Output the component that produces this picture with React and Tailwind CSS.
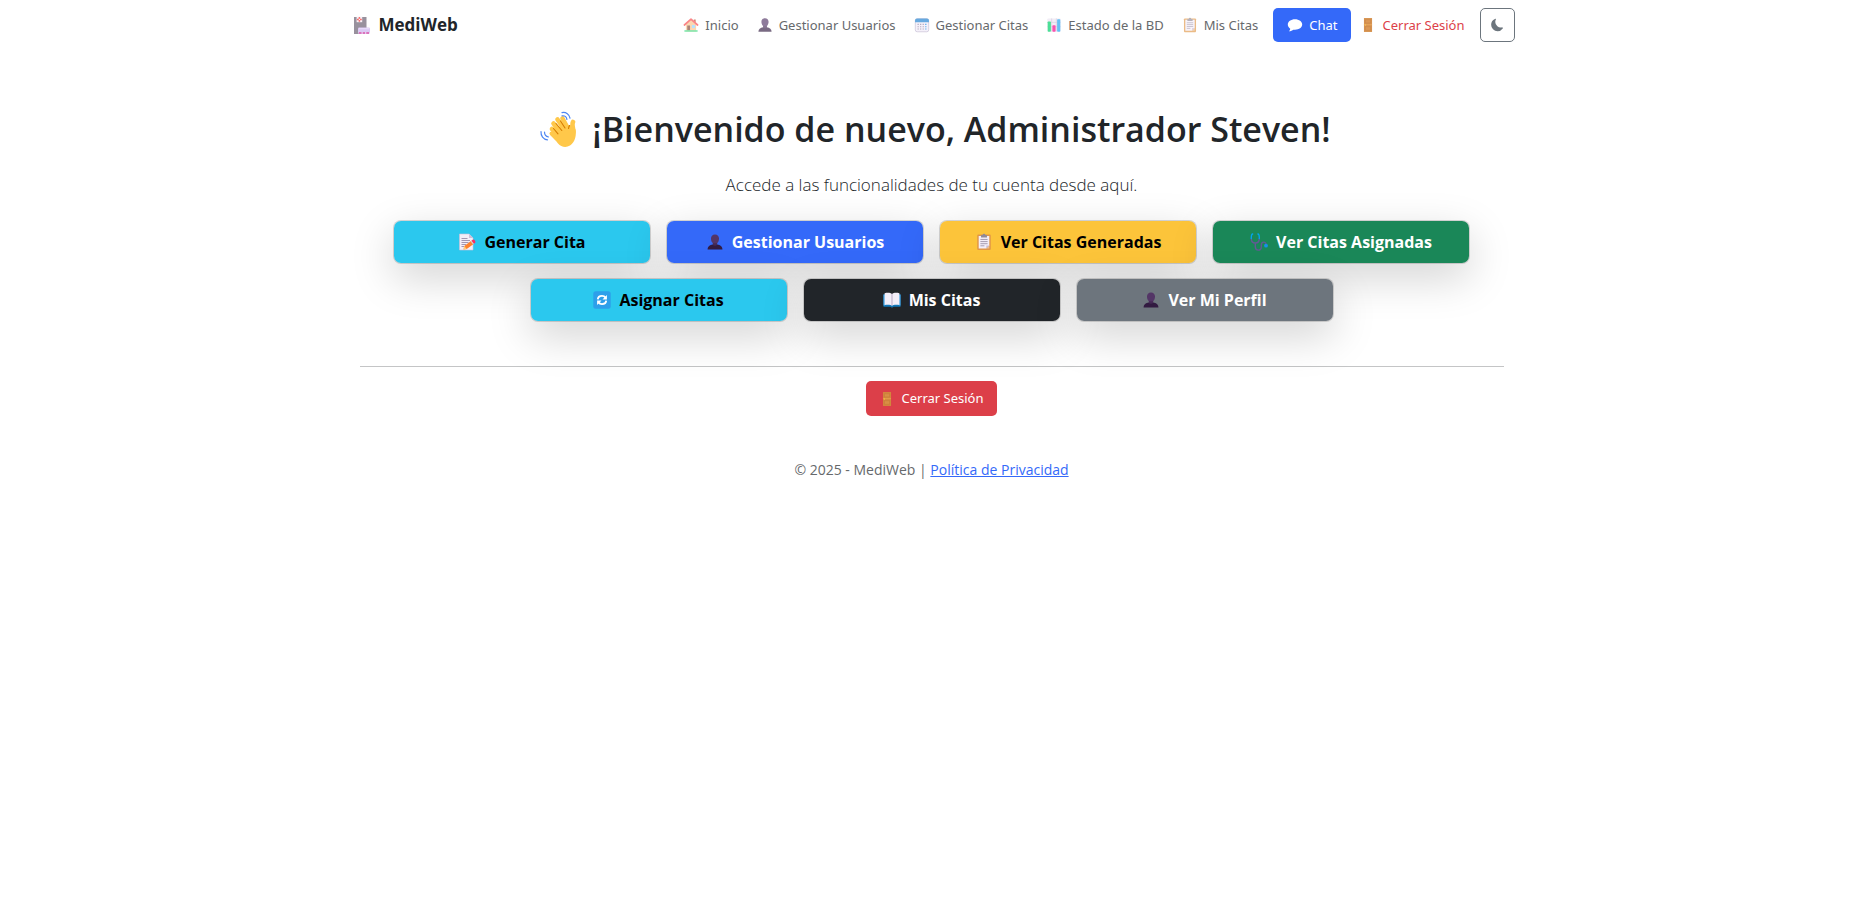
import React from "react";

/* ---------- Icons ---------- */

function Icon({ size = "size-4", viewBox = "-0.5 -0.5 17 17", className = "", children }) {
  return (
    <svg aria-hidden="true" viewBox={viewBox} className={`shrink-0 ${size} ${className}`} fill="none">
      {children}
    </svg>
  );
}

const Hospital = () => (
  <Icon size="size-[18px]" viewBox="0 0 18 18" className="opacity-70">
    <path d="M1 1h12.500v17H1z" fill="#6d6374" />
    <path d="M3.600 .6h5.600v5.600H3.600z" fill="#f3eef8" />
    <path d="M6.400 1v4.800M4 3.400h4.800" stroke="#f8312f" strokeWidth="1.500" />
    <circle cx="6.400" cy="3.400" r=".7" fill="#f3eef8" />
    <rect x="5" y="11.500" width="12" height="5.500" rx="1.200" fill="#cdb4f0" />
    <path d="M6 12.700h10" stroke="#e0d0fa" strokeWidth="1" />
    <path d="M5.500 16h11v2h-11z" fill="#d9b3e8" />
    <path d="M6 17h2.500M9.800 17h2.200M13.300 17h2.700" stroke="#c8108a" strokeWidth="1.600" />
  </Icon>
);

const House = () => (
  <Icon className="opacity-65">
    <path d="M2.600 6.500 8 2l5.400 4.500V15H2.600z" fill="#f9c28a" />
    <path d="M11 2.200h2v3.500l-2-1.700z" fill="#b4522f" />
    <path d="M1 8 8 1.800 15 8" stroke="#f8454a" strokeWidth="1.800" strokeLinecap="round" strokeLinejoin="round" />
    <path d="M4 8.500h3V14H4z" fill="#7d4533" />
    <rect x="9" y="8" width="3.200" height="3.200" fill="#8fd0ff" />
    <path d="M1 13.500h14v1.700H1z" fill="#3ddc84" />
  </Icon>
);

const Bust = ({ faded = false, size = "size-4" }) => (
  <Icon size={size} className={faded ? "opacity-65" : ""}>
    <path d="M8 .8c2.400 0 3.800 1.600 3.800 3.800 0 1.700-.6 3.500-1.800 4.500v1.500H6V9.100C4.800 8.100 4.200 6.300 4.200 4.600 4.200 2.400 5.600.8 8 .8z" fill="#533566" />
    <path d="M1 15.200c0-3 2-4.200 5-4.800h4c3 .6 5 1.800 5 4.800z" fill="#321b41" />
    <path d="M6 9.200h4v1.600c-1 1-3 1-4 0z" fill="#452a56" />
  </Icon>
);

const Calendar = () => (
  <Icon className="opacity-70">
    <rect x=".9" y="1.400" width="14.200" height="13.800" rx="2" fill="#f1ecf8" stroke="#b8aecb" strokeWidth=".8" />
    <path d="M.6 5V3.200C.6 2 1.500 1.100 2.700 1.100h10.600c1.200 0 2.100.9 2.100 2.100V5z" fill="#2785d2" />
    <g fill="#8a7b9c">
      <path d="M6 6.800h1.200V8H6zM8.700 6.800h1.200V8H8.700zM3.300 9.200h1.200v1.200H3.300zM6 9.200h1.200v1.200H6zM8.700 9.200h1.200v1.200H8.700zM3.300 11.600h1.200v1.200H3.300zM6 11.600h1.200v1.200H6zM8.700 11.600h1.200v1.200H8.700zM3.300 6.800h1.200V8H3.300z" />
    </g>
    <path d="M11.400 6.800h1.300V8h-1.300zM11.400 9.200h1.300v1.200h-1.300zM11.400 11.600h1.300v1.200h-1.300z" fill="#0a84e8" />
  </Icon>
);

const Chart = () => (
  <Icon className="opacity-70">
    <rect x="1" y="1" width="14" height="14" rx="1" fill="#ece6f3" />
    <path d="M1 5.200h14M1 9.800h14M5.500 1v14M10.500 1v14" stroke="#c5b9d2" strokeWidth=".7" />
    <rect x="1.300" y="4.300" width="3.400" height="10.900" rx=".8" fill="#00d26a" />
    <rect x="6.300" y="8.300" width="3.400" height="6.900" rx=".8" fill="#f70a8d" />
    <rect x="11.300" y="1.800" width="3.400" height="13.400" rx=".8" fill="#26a6f0" />
  </Icon>
);

const Clipboard = ({ faded = false, size = "size-4" }) => (
  <Icon size={size} className={faded ? "opacity-65" : ""}>
    <rect x="1.600" y="1" width="12.800" height="14.600" rx="1" fill="#e19747" />
    <path d="M3 2.400h10v8.800L10.200 14.200H3z" fill="#f3eef8" />
    <path d="M13 11.200v3h-2.800z" fill="#f0c08a" />
    <path d="M10.200 14.200v-3H13z" fill="#c9bcd4" />
    <path d="M4.600 5.600h6.800M4.600 7.600h6.800M4.600 9.600h6.800M4.600 11.600h3.800" stroke="#998ea4" strokeWidth=".8" />
    <path d="M5.200 1.500h1.500a1.300 1.300 0 0 1 2.600 0h1.500v2.300H5.200z" fill="#918a96" />
  </Icon>
);

const Bubble = () => (
  <Icon viewBox="0 0 16 16">
    <path d="M8 2.300c-4.100 0-7.200 2.300-7.200 5.300 0 1.700.9 3.100 2.400 4.100 0 1.100-.6 1.900-1.300 2.500 1.900 0 3.500-.6 4.500-1.500.5.100 1 .1 1.600.1 4.100 0 7.200-2.300 7.200-5.200S12.100 2.300 8 2.300z" fill="#fff" />
  </Icon>
);

const Door = ({ faded = false }) => (
  <Icon className={faded ? "opacity-90" : ""}>
    <path d="M3.700 .6h8.600v14.800H3.700z" fill="#d3883e" />
    <path d="M5.200 2.400h5.600v3.400H5.200zM5.200 9.800h5.600v3.800H5.200z" fill="#d98f45" stroke="#c67b38" strokeWidth=".6" />
    <path d="M3.700 7.700h8.600" stroke="#e8a04f" strokeWidth="1" />
    <circle cx="5.200" cy="8" r=".7" fill="#f9c23c" />
  </Icon>
);

const Moon = () => (
  <Icon size="size-3.5" viewBox="0 0 16 16">
    <path d="M6.500.8a.8.8 0 0 1 .2.9 6 6 0 0 0-.7 2.900 6.300 6.300 0 0 0 7.800 6.100.8.8 0 0 1 .8 1.200A7.300 7.300 0 0 1 8.600 15 7.300 7.300 0 0 1 1.300 7.700 7.300 7.300 0 0 1 5.600 1a.8.8 0 0 1 .9-.2z" fill="#6c757d" />
  </Icon>
);

const Memo = () => (
  <Icon size="size-[18px]" viewBox="0 0 18 18">
    <path d="M1.500 1h9.600l3.900 3.900V17H1.500z" fill="#f3eef8" stroke="#cdbfd9" strokeWidth=".6" />
    <path d="M11 1v4h4z" fill="#cdbfd9" />
    <path d="M3.500 5.500h6M3.500 7.500h8.500M3.500 9.500h7M3.500 11.500h4.500M3.500 13.500h2.500" stroke="#9a8ba8" strokeWidth=".9" />
    <path d="m5.500 16.500.8-3.500 7-5.200 2.400 3.100-7 5.200z" fill="#ff822d" />
    <path d="m5.500 16.500.8-3.500 2.400 3.100z" fill="#ffce7c" />
    <path d="m13.300 7.800 1.500-1.100c1.300-.7 3.300 1.700 2.300 3l-1.400 1.200z" fill="#f92f60" />
    <path d="m12.600 8.300.9-.6 2.300 3-.8.7z" fill="#d3d3d3" />
  </Icon>
);

const Stethoscope = () => (
  <Icon size="size-[18px]" viewBox="0 0 18 18">
    <path d="M1.300 5.200c0 3.100 1.600 4.800 4 4.800s4-1.700 4-4.800M5.300 10v3.800c0 4.300 6 4.300 6 .4v-2c0-4 4.800-3.900 4.800-.6" stroke="#635994" strokeWidth="1.400" strokeLinecap="round" />
    <path d="M2.700 1c-1.600.2-1.400 2-1.400 4.500M7.900 1c1.600.2 1.400 2 1.400 4.500" stroke="#00a6ed" strokeWidth="1.300" strokeLinecap="round" />
    <circle cx="16" cy="12.700" r="1.900" fill="#1591ea" />
  </Icon>
);

const Refresh = () => (
  <Icon size="size-[18px]" viewBox="0 0 18 18">
    <rect x=".3" y=".3" width="17.400" height="17.400" rx="2.500" fill="#2d9fea" />
    <path d="M4.800 8.300C5 5.800 6.800 4.900 9 4.900c1.800 0 2.800.7 3.500 1.700M13.200 9.700c-.2 2.500-2 3.400-4.200 3.400-1.800 0-2.800-.7-3.500-1.700" stroke="#fff" strokeWidth="1.900" />
    <path d="M13.900 3.900v4.500H9.500zM4.100 14.100V9.600h4.400z" fill="#fff" />
  </Icon>
);

const Book = () => (
  <Icon size="size-[18px]" viewBox="0 0 18 18">
    <path d="M.5 3.500h17v12.300h-7l-1.500.9-1.500-.9h-7z" fill="#1177b8" />
    <path d="M.5 3.500h1.200v11H.5zM16.300 3.500h1.200v11h-1.200z" fill="#50b2f0" />
    <path d="M1.600 2.300C4.500 1.500 7.500 1.700 9 3c1.500-1.300 4.500-1.500 7.400-.7v11.800c-2.900-.7-5.900-.6-7.400.6-1.500-1.200-4.500-1.300-7.400-.6z" fill="#f3eef8" />
    <path d="M9 3v11.500" stroke="#b9abc6" strokeWidth="1" />
  </Icon>
);

const Wave = () => (
  <Icon size="size-9" viewBox="0 0 36 36">
    <g stroke="#ffc84a" strokeLinecap="round">
      <path d="m13.500 12.500 10 12" strokeWidth="4.600" />
      <path d="m17.500 8.500 9 13" strokeWidth="4.600" />
      <path d="m22.500 7.500 6 11" strokeWidth="4.600" />
      <path d="m12 18 9 9" strokeWidth="4.600" />
      <path d="M33 11c-1.500 3 .5 6.500.5 10" strokeWidth="4.600" />
    </g>
    <path d="M14 20c4-5 11-7 17-5.500l4.500 4c1.200 7-1 13-5.500 16-4 2.500-9 1.500-12-2l-7-9z" fill="#ffc84a" />
    <path d="m11.500 22.500 5 5" stroke="#ffc84a" strokeWidth="4" strokeLinecap="round" />
    <path d="m13.500 17.500 4.500 5.300M16 12.500l5.800 7M20.500 10l4.500 7M28.600 17.500c0-1.500.5-2.200 1-3" stroke="#d67d00" strokeWidth="1.100" strokeLinecap="round" />
    <g stroke="#4e86f2" strokeWidth="1.200" strokeLinecap="round">
      <path d="M22 1.600c4-.8 7.500 1.700 8 5.600M22 4.800c2.500-.3 4.500 1.200 4.900 3.600M1 20.500c-.3 4.300 2.200 8 6.500 8.300M4.500 21c0 2.500 1.500 4.500 4 5" />
    </g>
  </Icon>
);

/* ---------- Pieces ---------- */

function NavItem({ icon, children, className = "text-[#66696c]" }) {
  return (
    <li>
      <a href="#" className={`flex items-center gap-1.5 px-[9px] py-2 ${className}`}>
        {icon}
        {children}
      </a>
    </li>
  );
}

const actions = [
  { label: "Generar Cita", icon: <Memo />, style: "bg-[#2bc8ee] text-black" },
  { label: "Gestionar Usuarios", icon: <Bust size="size-[18px]" />, style: "bg-[#3469f9] text-white" },
  { label: "Ver Citas Generadas", icon: <Clipboard size="size-[18px]" />, style: "bg-[#fcc43a] text-black" },
  { label: "Ver Citas Asignadas", icon: <Stethoscope />, style: "bg-[#1a8758] text-white" },
  { label: "Asignar Citas", icon: <Refresh />, style: "bg-[#2bc8ee] text-black" },
  { label: "Mis Citas", icon: <Book />, style: "bg-[#212529] text-white" },
  { label: "Ver Mi Perfil", icon: <Bust size="size-[18px]" />, style: "bg-[#6d757d] text-white" },
];

export default function App() {
  return (
    <div className="min-h-screen bg-white font-['Open_Sans','Noto_Sans',sans-serif] text-sm text-[#212529]">
      <header>
        <nav className="mx-auto flex h-[50px] max-w-[1188px] items-center justify-between px-[11px]" aria-label="Principal">
          <a href="#" className="flex items-center gap-2 px-1 text-[17px] font-bold">
            <Hospital />
            MediWeb
          </a>
          <ul className="flex items-center font-['Noto_Sans',sans-serif] text-[13px]">
            <NavItem icon={<House />}>Inicio</NavItem>
            <NavItem icon={<Bust faded />}>Gestionar Usuarios</NavItem>
            <NavItem icon={<Calendar />}>Gestionar Citas</NavItem>
            <NavItem icon={<Chart />}>Estado de la BD</NavItem>
            <NavItem icon={<Clipboard faded />}>Mis Citas</NavItem>
            <li className="ml-1.5">
              <button type="button" className="flex h-[34px] items-center gap-1.5 rounded-[5px] bg-[#3469f9] px-3.5 text-white">
                <Bubble />
                Chat
              </button>
            </li>
            <NavItem icon={<Door faded />} className="text-[#dc3f49]">
              Cerrar Sesión
            </NavItem>
            <li className="ml-1.5">
              <button
                type="button"
                aria-label="Cambiar tema"
                className="flex h-[34px] w-[35px] items-center justify-center rounded-[5px] border border-[#6c757d]"
              >
                <Moon />
              </button>
            </li>
          </ul>
        </nav>
      </header>

      <main className="mx-auto max-w-[1166px] px-[11px] pt-[57px] text-center">
        <h1 className="flex items-center justify-center gap-4 pl-2 text-[34px] leading-[44px] font-semibold">
          <Wave />
          ¡Bienvenido de nuevo, Administrador Steven!
        </h1>
        <p className="mt-5 text-[17px] leading-7 font-light">Accede a las funcionalidades de tu cuenta desde aquí.</p>

        <div className="mx-auto mt-[21px] flex max-w-[1092px] flex-wrap justify-center gap-x-[15px] gap-y-[14px]">
          {actions.map(({ label, icon, style }) => (
            <button
              key={label}
              type="button"
              className={`flex h-[44px] w-[258px] items-center justify-center gap-2 rounded-lg border border-black/15 bg-clip-padding text-base font-bold shadow-[0_14px_43px_rgba(0,0,0,0.175)] ${style}`}
            >
              {icon}
              {label}
            </button>
          ))}
        </div>

        <hr className="mt-[44px] border-[#c4c5c6]" />
        <button
          type="button"
          className="mx-auto mt-[14px] flex h-[35px] items-center gap-1.5 rounded-[5px] bg-[#dc3f49] px-[13px] font-['Noto_Sans',sans-serif] text-[13px] text-white"
        >
          <Door />
          Cerrar Sesión
        </button>
      </main>

      <footer className="mt-11 text-center text-sm leading-5 text-[#66696c]">
        © 2025 - MediWeb |{" "}
        <a href="#" className="text-[#3469f9] underline">
          Política de Privacidad
        </a>
      </footer>
    </div>
  );
}
